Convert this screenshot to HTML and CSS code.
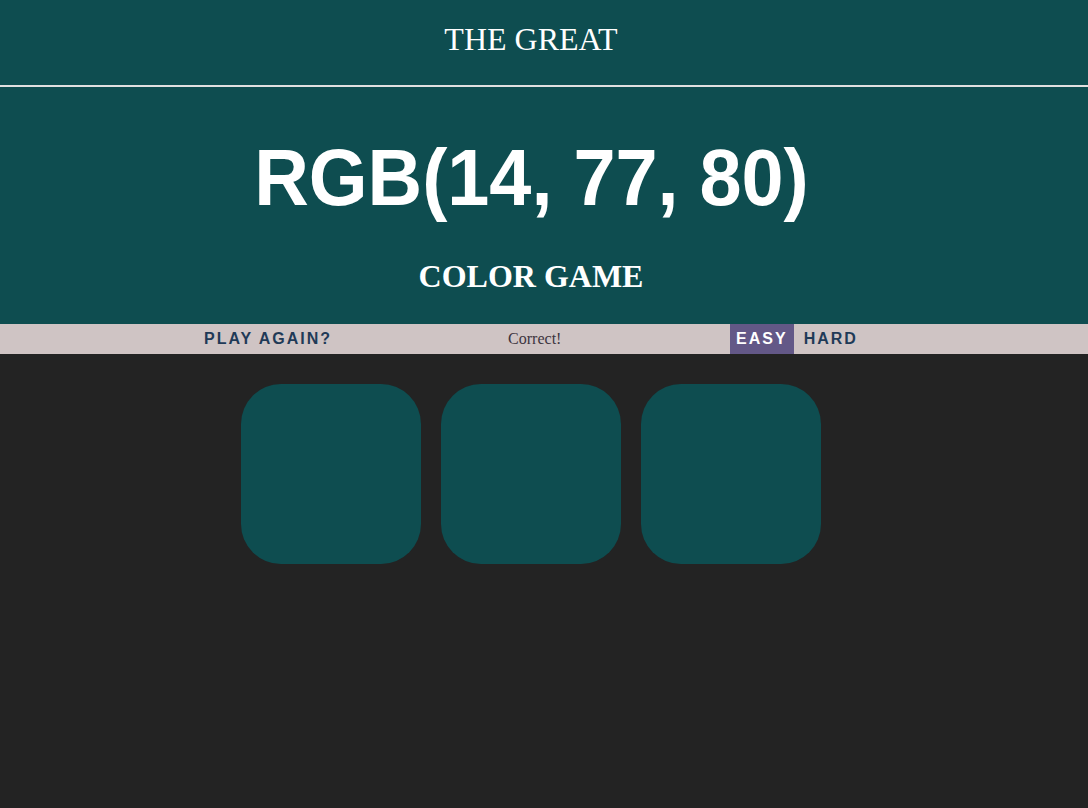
FILE: index.html
```html
<!DOCTYPE html>
<html lang="en">
<head>
<meta charset="utf-8">
<title>Color Game</title>
<link rel="stylesheet" href="styles.css">
</head>
<body>
<header class="header">
  <div class="top"><span class="top-text">THE GREAT</span></div>
  <div class="rgb"><span class="rgb-text">RGB(14, 77, 80)</span></div>
  <div class="subtitle">COLOR GAME</div>
</header>
<nav class="stripe">
  <div class="stripe-inner">
    <button class="btn reset">PLAY AGAIN?</button>
    <span class="message">Correct!</span>
    <div class="modes">
      <button class="btn mode selected">EASY</button>
      <button class="btn mode">HARD</button>
    </div>
  </div>
</nav>
<main class="container">
  <div class="square"></div>
  <div class="square"></div>
  <div class="square"></div>
</main>
</body>
</html>
```
FILE: styles.css
```css
html, body {
  margin: 0;
  padding: 0;
  height: 100%;
}
body {
  background: #232323;
  font-family: "Liberation Serif", "Times New Roman", serif;
}
.header {
  background: #0e4d50;
  color: #fff;
  height: 324px;
  display: flex;
  flex-direction: column;
}
.top {
  border-bottom: 2px solid #e0e0e0;
  display: flex;
  justify-content: center;
  padding-right: 26px;
  box-sizing: border-box;
  height: 87px;
}
.top-text {
  font-size: 32px;
  line-height: 1;
  margin-top: 23px;
}
.rgb {
  display: flex;
  justify-content: center;
  padding-right: 26px;
  margin-top: 51px;
}
.rgb-text {
  font-family: "Liberation Sans", Arial, sans-serif;
  font-weight: bold;
  font-size: 80px;
  line-height: 1;
  display: inline-block;
  transform: scaleX(0.945);
  white-space: nowrap;
}
.subtitle {
  font-weight: bold;
  font-size: 32px;
  line-height: 1;
  text-align: center;
  padding-right: 26px;
  margin-top: 42px;
}
.stripe {
  background: #cfc4c4;
  height: 30px;
}
.stripe-inner {
  width: 1062px;
  height: 30px;
  display: flex;
  align-items: center;
}
.btn {
  border: none;
  background: none;
  font-family: "Liberation Sans", Arial, sans-serif;
  font-weight: bold;
  font-size: 16px;
  letter-spacing: 2px;
  color: #1f3a57;
  height: 30px;
  padding: 0 6px;
  margin: 0;
  cursor: pointer;
}
.reset {
  margin-left: 198px;
}
.message {
  font-size: 16px;
  color: #3d3540;
  margin-left: 170px;
  width: 58px;
}
.modes {
  display: flex;
  margin-left: 164px;
}
.mode.selected {
  background: #635887;
  color: #fff;
}
.mode + .mode {
  margin-left: 4px;
}
.container {
  width: 580px;
  margin: 30px 0 0 241px;
  display: flex;
  gap: 20px;
}
.square {
  width: 180px;
  height: 180px;
  border-radius: 40px;
  background: #0e4d50;
}
```
